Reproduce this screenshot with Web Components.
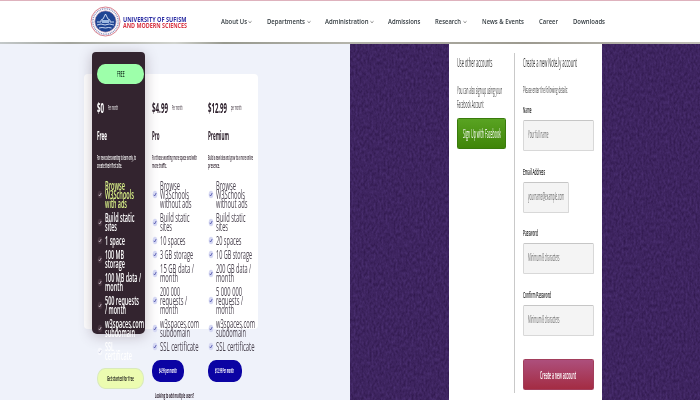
<!DOCTYPE html>
<html lang="en"><head><meta charset="utf-8"><title>University of Sufism and Modern Sciences</title>
<style>
html,body{margin:0;width:700px;height:400px;overflow:hidden;background:#fff;font-family:"Open Sans","Noto Sans",sans-serif}
</style></head><body><app-page></app-page>
<script>
const define=(name,html,init)=>customElements.define(name,class extends HTMLElement{
  connectedCallback(){
    if(!this.shadowRoot)this.attachShadow({mode:'open'}).innerHTML=typeof html==='function'?html(this):html;
    if(init)init(this);
  }
});

// One line of text condensed or widened to the width "w"; s = font size, h = line box, mt = top margin.
define('fit-text',el=>{
  const a=(n,d)=>el.getAttribute(n)||d;
  return `<style>:host{display:block;flex:none;width:${a('w')}px;height:${a('h','9')}px;margin-top:${a('mt','0')}px;line-height:${a('h','9')}px;font-size:${a('s','12')}px;font-weight:${a('wt','inherit')};white-space:nowrap}
  span{display:inline-block;vertical-align:top;transform-origin:0 50%}</style><span><slot></slot></span>`;
},el=>{
  const s=el.shadowRoot.querySelector('span');
  s.style.transform=`scaleX(${+el.getAttribute('w')/s.getBoundingClientRect().width})`;
});

define('site-logo',`<style>:host{display:flex;align-items:center;gap:2px;width:130.5px;flex:none}
.a{color:#2d2fa4}.b{color:#d83443}svg{display:block;flex:none}.n{padding-top:2px}</style>
<svg width="31" height="31" viewBox="0 0 31 31"><circle cx="15.5" cy="15.5" r="14.5" fill="#fff" stroke="#d9818e" stroke-width="1"/>
<circle cx="15.5" cy="15.5" r="12.7" fill="none" stroke="#8d91bd" stroke-width="1.5" stroke-dasharray="1 .8"/>
<circle cx="15.5" cy="15.5" r="10.7" fill="#1f4594" stroke="#e6b6c2" stroke-width=".6"/>
<path d="M7 16h4v-2l2-1 1-2 1.5-3 1.5 3 1 2 2 1v2h4M7 19q4-2 8 0 4-2 9 0M9 22q3-1 6.500 0 3-1 6 0" fill="none" stroke="#dce8fa" stroke-width=".9"/><path d="M12 14h7v3h-7z" fill="#9bb8e2"/></svg>
<div class="n"><fit-text class="a" w="63.5" s="6.4" h="7" wt="700">UNIVERSITY OF SUFISM</fit-text><fit-text class="b" w="64" s="6.4" h="6" wt="700">AND MODERN SCIENCES</fit-text></div>`);

define('nav-item',el=>`<style>:host{display:flex;align-items:center;gap:1.500px;width:${el.getAttribute('slotw')}px;flex:none;color:#333b40}svg{flex:none}</style>
<fit-text w="${el.getAttribute('w')}" s="6.2" h="9" wt="600"><slot></slot></fit-text>${el.hasAttribute('menu')?'<svg width="4" height="4" viewBox="0 0 4 4"><path d="M.5 1.300 2 2.700 3.500 1.300" fill="none" stroke="#555" stroke-width=".7"/></svg>':''}`);

define('site-header',`<style>:host{display:grid;grid-template-rows:1px 41px 2px;height:44px;background:#fff}
.t{background:#deb2bd}.m{display:flex;align-items:center;padding-left:90px}
.b{background:linear-gradient(90deg,#b9bfc0,#91948b 10%,#c9ccc6 25%,#85877b 32%,#a7a79c 50%,#8b887c 75%,#b7b4ab);opacity:.85}
nav{display:flex}</style><div class="t"></div><div class="m"><site-logo></site-logo><nav>
<nav-item slotw="46.5" w="26" menu>About Us</nav-item><nav-item slotw="58" w="38" menu>Departments</nav-item><nav-item slotw="63" w="43.500" menu>Administration</nav-item><nav-item slotw="47" w="32.500">Admissions</nav-item><nav-item slotw="46.5" w="26" menu>Research</nav-item><nav-item slotw="57" w="42">News &amp; Events</nav-item><nav-item slotw="34" w="19">Career</nav-item><nav-item slotw="40" w="32">Downloads</nav-item></nav></div><div class="b"></div>`);

define('feature-row',`<style>:host{display:flex;align-items:center;gap:2px;margin-bottom:5px}svg{flex:none}ellipse{fill:var(--dot,#d5d8f3)}path{stroke:var(--tick,#4a4ca8)}</style>
<svg width="6" height="9" viewBox="0 0 6 9"><ellipse cx="3" cy="4.500" rx="2.300" ry="3.800"/><path d="M1.800 4.800 2.600 6 4.200 3" fill="none" stroke-width=".8"/></svg><div><slot></slot></div>`);

define('price-plan',`<style>:host{display:block;color:#2d202c}.p{display:flex;gap:4px;align-items:center}slot[name=rows]{display:block}</style>
<slot name="top"></slot><div class="p"><slot name="price"></slot><slot name="per"></slot></div><slot name="info"></slot><slot name="rows"></slot><slot name="end"></slot>`);

define('pill-button',el=>`<style>:host{display:flex;align-items:center;justify-content:center;box-sizing:border-box;width:${el.getAttribute('bw')}px;height:${el.getAttribute('bh')}px;border-radius:8px/10px}</style><slot></slot>`);

const row=lines=>`<feature-row>${lines.map(([t,w])=>`<fit-text w="${w}" s="12.3">${t}</fit-text>`).join('')}</feature-row>`;
const rows=a=>`<div slot="rows" class="rows">${a.map(row).join('')}</div>`;
const head=(price,pw,per,perw,name,nw,d1,w1,d2,w2)=>`<fit-text slot="price" w="${pw}" s="15" h="16" wt="700">${price}</fit-text><fit-text slot="per" w="${perw}" s="7" h="8" mt="2">${per}</fit-text>
<div slot="info"><fit-text w="${nw}" s="12.5" h="14" mt="14" wt="700">${name}</fit-text><fit-text w="${w1}" s="7.2" h="8" mt="10" wt="600">${d1}</fit-text><fit-text w="${w2}" s="7.2" h="8.5" wt="600">${d2}</fit-text></div>`;

define('pricing-panel',()=>`<style>:host{display:block;box-sizing:border-box;width:350px;height:356px;background:#eff2fa;padding:30px 0 0 84px}
.sheet{display:grid;grid-template-columns:53px 56px 50px;column-gap:6.500px;box-sizing:border-box;width:174px;height:255px;padding-left:8px;background:#fff;border-radius:4px}
.sheet>*{box-sizing:border-box}
.dark{height:282px;margin-top:-22px;padding:12px 0 0 5px;background:#33242f;border-radius:4px 4px 5px 5px;color:#fff;box-shadow:0 2px 14px #55405055;--dot:#46343f;--tick:#d4cbd5}
.dark .rows feature-row:first-child{color:#dcf58a}
.dark .rows feature-row:last-child{--dot:#f7f8fd;--tick:#c9cbe0}
.rows{padding-top:11.500px;color:#4b4450;font-weight:500}.dark .rows{color:#fff;font-weight:600}
.pro{padding-top:25px}.top{background:#9dffaa;color:#254b31;margin-bottom:15px}
.lime{background:#ecfcb0;border:1px solid #d9eabc;color:#292b22;margin-top:7.5px}
.navy{background:#0b03a3;color:#fff;margin-top:8.5px}</style><div class="sheet">
<price-plan class="dark"><pill-button slot="top" class="top" bw="47" bh="20"><fit-text w="7.500" s="8.500" h="10" wt="600">FREE</fit-text></pill-button>
${head('$0',7,'Per month',10,'Free',10,'For new coders wanting to learn only, to',39,'create their first site.',25)}
${rows([[['Browse',20],['W3Schools',29],['with ads',22]],[['Build static',29.5],['sites',12]],[['1 space',20]],[['100 MB',19],['storage',20]],[['100 MB data /',36],['month',18]],[['500 requests',34],['/ month',21]],[['w3spaces.com',39],['subdomain',30]],[['SSL',9],['certificate',27]]])}
<pill-button slot="end" class="lime" bw="47" bh="21"><fit-text w="27" s="7.500" h="9" wt="700">Get started for free</fit-text></pill-button></price-plan>
<price-plan class="pro">${head('$4.99',16,'Per month',10.5,'Pro',7.5,'For those wanting more space and with',45,'more traffic.',15)}
${rows([[['Browse',20],['W3Schools',29],['without ads',31.5]],[['Build static',29.5],['sites',12]],[['10 spaces',25.5]],[['3 GB storage',33]],[['15 GB data /',34],['month',18]],[['200 000',20],['requests /',27],['month',18]],[['w3spaces.com',39],['subdomain',30]],[['SSL certificate',38.5]]])}
<div slot="end"><pill-button class="navy" bw="32.500" bh="22"><fit-text w="18" s="7.400" h="9" wt="700">$4.99 per month</fit-text></pill-button><fit-text w="39" s="7.200" h="8" mt="9" wt="700" style="margin-left:3.5px">Looking to add multiple users?</fit-text></div></price-plan>
<price-plan class="pro" style="margin-left:-6.5px">${head('$12.99',19,'per month',10.5,'Premium',21,'Build a new idea and grow to a more online',45,'presence.',12)}
${rows([[['Browse',20],['W3Schools',29],['without ads',31.5]],[['Build static',29.5],['sites',12]],[['20 spaces',25.5]],[['10 GB storage',36]],[['200 GB data /',35],['month',18]],[['5 000 000',26],['requests /',27],['month',18]],[['w3spaces.com',39],['subdomain',30]],[['SSL certificate',38.5]]])}
<pill-button slot="end" class="navy" bw="34.500" bh="22"><fit-text w="19" s="7.400" h="9" wt="700">$12.99 Per month</fit-text></pill-button></price-plan></div>`);

define('form-field',el=>`<style>:host{display:block;margin-bottom:15.5px;color:#222}
.i{box-sizing:border-box;width:${el.getAttribute('bw')||71}px;height:31px;margin-top:5px;padding:8px 0 0 4px;background:#f4f4f4;border:1px solid #d8d8d8;border-top-color:#c6c6c6;border-radius:1.500px;color:#666}</style>
<fit-text w="${el.getAttribute('lw')}" s="9" h="10" wt="600">${el.getAttribute('label')}</fit-text><div class="i"><fit-text w="${el.getAttribute('pw')}" s="10" h="11"><slot></slot></fit-text></div>`);

define('signup-panel',`<style>:host{display:block;position:relative;width:350px;height:356px;background:#3d2460;overflow:hidden}
.tex{position:absolute;inset:0}
.card{position:relative;display:flex;box-sizing:border-box;width:153px;height:356px;margin-left:99px;padding:9px 8px 7px;background:#fff;color:#3c3c3c}
.other{width:57px;border-right:1px solid #c9c9c9}.new{padding-left:7.5px;box-sizing:border-box;width:78.5px}
.btn{display:flex;align-items:center;justify-content:center;height:31px;color:#fff;border-radius:1.500px;box-sizing:border-box}
.fb{width:49px;margin-top:7px;background:linear-gradient(#59a322,#3f8508);border:1px solid #397b0c}
.go{width:71px;margin-top:23px;background:linear-gradient(#ad4f7c,#a42c43);border:1px solid #a23e5c}
.fields{padding-top:9px}</style>
<svg class="tex" width="350" height="356"><filter id="g" x="0" y="0" width="100%" height="100%" color-interpolation-filters="sRGB"><feTurbulence type="fractalNoise" baseFrequency=".5 .28" numOctaves="2" seed="4"/><feColorMatrix values=".14 0 0 0 .172  .12 0 0 0 .082  .19 0 0 0 .28  0 0 0 0 1"/></filter><rect width="350" height="356" filter="url(#g)"/></svg>
<div class="card"><div class="other"><fit-text w="35.500" s="12.5" h="14" mt="3" wt="400">Use other accounts</fit-text><fit-text w="45" s="10" h="14" mt="13">You can also sign up using your</fit-text><fit-text w="26.500" s="10" h="14">Facebook Account</fit-text>
<div class="btn fb"><fit-text w="38" s="12" h="13">Sign Up with Facebook</fit-text></div></div>
<div class="new"><fit-text w="54" s="12.5" h="14" mt="3" wt="400">Create a new Note.ly account</fit-text><fit-text w="45" s="9.5" h="12" mt="14">Please enter the following details:</fit-text>
<div class="fields"><form-field label="Name" lw="8.500" pw="20.500">Your full name</form-field><form-field label="Email Address" lw="22" pw="36" bw="46">yourname@example.com</form-field><form-field label="Password" lw="15" pw="31.500">Minimum 8 characters</form-field><form-field label="Confirm Password" lw="28" pw="31.500" style="margin:0">Minimum 8 characters</form-field></div>
<div class="btn go"><fit-text w="36" s="11.500" h="13" wt="600">Create a new account</fit-text></div></div></div>`);

define('app-page',`<style>:host{display:block;width:700px;height:400px;overflow:hidden}main{display:flex}</style><site-header></site-header><main><pricing-panel></pricing-panel><signup-panel></signup-panel></main>`);
</script></body></html>
